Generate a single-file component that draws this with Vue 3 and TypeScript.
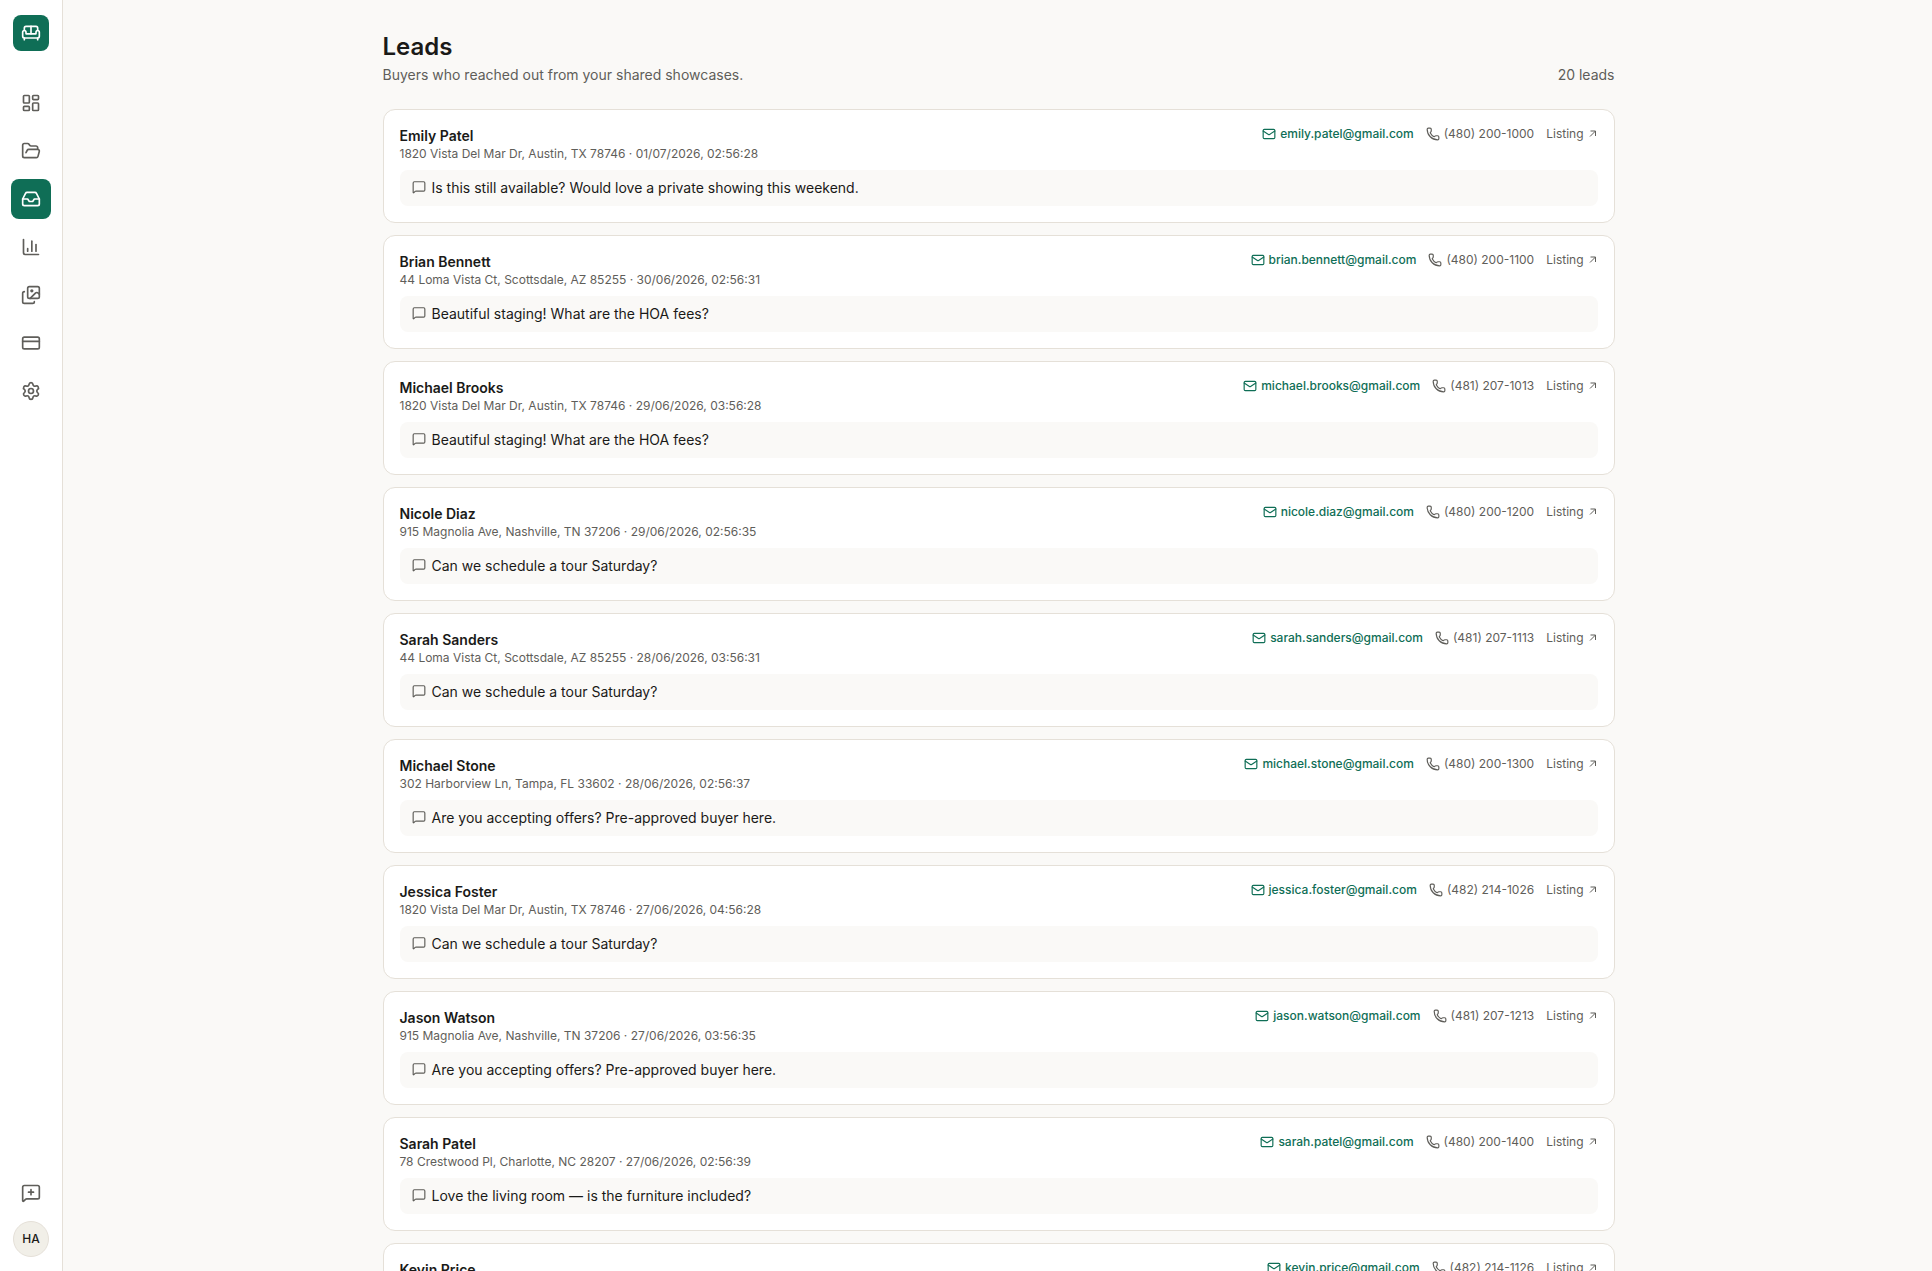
<script setup lang="ts">
interface Lead {
  name: string
  address: string
  date: string
  email: string
  phone: string
  message: string
}

interface NavItem {
  label: string
  active?: boolean
  icon: string
}

const nav: NavItem[] = [
  {
    label: 'Dashboard',
    icon: '<rect width="7" height="9" x="3" y="3" rx="1"/><rect width="7" height="5" x="14" y="3" rx="1"/><rect width="7" height="9" x="14" y="12" rx="1"/><rect width="7" height="5" x="3" y="16" rx="1"/>',
  },
  {
    label: 'Projects',
    icon: '<path d="m6 14 1.5-2.9A2 2 0 0 1 9.24 10H20a2 2 0 0 1 1.94 2.5l-1.54 6a2 2 0 0 1-1.95 1.5H4a2 2 0 0 1-2-2V5a2 2 0 0 1 2-2h3.9a2 2 0 0 1 1.69.9l.81 1.2a2 2 0 0 0 1.67.9H18a2 2 0 0 1 2 2v2"/>',
  },
  {
    label: 'Leads',
    active: true,
    icon: '<path d="M22 12h-6l-2 3h-4l-2-3H2"/><path d="M5.45 5.11 2 12v6a2 2 0 0 0 2 2h16a2 2 0 0 0 2-2v-6l-3.45-6.89A2 2 0 0 0 16.76 4H7.24a2 2 0 0 0-1.79 1.11z"/>',
  },
  {
    label: 'Analytics',
    icon: '<path d="M3 3v16a2 2 0 0 0 2 2h16"/><path d="M18 17V9"/><path d="M13 17V5"/><path d="M8 17v-3"/>',
  },
  {
    label: 'Gallery',
    icon: '<path d="m22 11-1.296-1.296a2.4 2.4 0 0 0-3.408 0L11 16"/><path d="M4 8a2 2 0 0 0-2 2v10a2 2 0 0 0 2 2h10a2 2 0 0 0 2-2"/><circle cx="13" cy="7" r="1" fill="currentColor"/><rect x="8" y="2" width="14" height="14" rx="2"/>',
  },
  {
    label: 'Billing',
    icon: '<rect width="20" height="14" x="2" y="5" rx="2"/><path d="M2 10h20"/>',
  },
  {
    label: 'Settings',
    icon: '<path d="M9.671 4.136a2.34 2.34 0 0 1 4.659 0 2.34 2.34 0 0 0 3.319 1.915 2.34 2.34 0 0 1 2.33 4.033 2.34 2.34 0 0 0 0 3.831 2.34 2.34 0 0 1-2.33 4.033 2.34 2.34 0 0 0-3.319 1.915 2.34 2.34 0 0 1-4.659 0 2.34 2.34 0 0 0-3.32-1.915 2.34 2.34 0 0 1-2.33-4.033 2.34 2.34 0 0 0 0-3.831A2.34 2.34 0 0 1 6.35 6.051a2.34 2.34 0 0 0 3.319-1.915"/><circle cx="12" cy="12" r="3"/>',
  },
]

const austin = '1820 Vista Del Mar Dr, Austin, TX 78746'
const scottsdale = '44 Loma Vista Ct, Scottsdale, AZ 85255'
const nashville = '915 Magnolia Ave, Nashville, TN 37206'

const leads: Lead[] = [
  { name: 'Emily Patel', address: austin, date: '01/07/2026, 02:56:28', email: 'emily.patel@gmail.com', phone: '(480) 200-1000', message: 'Is this still available? Would love a private showing this weekend.' },
  { name: 'Brian Bennett', address: scottsdale, date: '30/06/2026, 02:56:31', email: 'brian.bennett@gmail.com', phone: '(480) 200-1100', message: 'Beautiful staging! What are the HOA fees?' },
  { name: 'Michael Brooks', address: austin, date: '29/06/2026, 03:56:28', email: 'michael.brooks@gmail.com', phone: '(481) 207-1013', message: 'Beautiful staging! What are the HOA fees?' },
  { name: 'Nicole Diaz', address: nashville, date: '29/06/2026, 02:56:35', email: 'nicole.diaz@gmail.com', phone: '(480) 200-1200', message: 'Can we schedule a tour Saturday?' },
  { name: 'Sarah Sanders', address: scottsdale, date: '28/06/2026, 03:56:31', email: 'sarah.sanders@gmail.com', phone: '(481) 207-1113', message: 'Can we schedule a tour Saturday?' },
  { name: 'Michael Stone', address: '302 Harborview Ln, Tampa, FL 33602', date: '28/06/2026, 02:56:37', email: 'michael.stone@gmail.com', phone: '(480) 200-1300', message: 'Are you accepting offers? Pre-approved buyer here.' },
  { name: 'Jessica Foster', address: austin, date: '27/06/2026, 04:56:28', email: 'jessica.foster@gmail.com', phone: '(482) 214-1026', message: 'Can we schedule a tour Saturday?' },
  { name: 'Jason Watson', address: nashville, date: '27/06/2026, 03:56:35', email: 'jason.watson@gmail.com', phone: '(481) 207-1213', message: 'Are you accepting offers? Pre-approved buyer here.' },
  { name: 'Sarah Patel', address: '78 Crestwood Pl, Charlotte, NC 28207', date: '27/06/2026, 02:56:39', email: 'sarah.patel@gmail.com', phone: '(480) 200-1400', message: 'Love the living room — is the furniture included?' },
  { name: 'Kevin Price', address: scottsdale, date: '26/06/2026, 04:56:31', email: 'kevin.price@gmail.com', phone: '(482) 214-1126', message: 'Can we schedule a tour Saturday?' },
]

const total = 20
</script>

<template>
  <div class="shell">
    <aside class="sidebar">
      <a class="logo" href="#" aria-label="Home">
        <svg class="icon" viewBox="0 0 24 24">
          <path d="M20 9V6a2 2 0 0 0-2-2H6a2 2 0 0 0-2 2v3" />
          <path d="M2 16a2 2 0 0 0 2 2h16a2 2 0 0 0 2-2v-5a2 2 0 0 0-4 0v1.5a.5.5 0 0 1-.5.5h-11a.5.5 0 0 1-.5-.5V11a2 2 0 0 0-4 0z" />
          <path d="M4 18v2" />
          <path d="M20 18v2" />
          <path d="M12 4v9" />
        </svg>
      </a>
      <nav class="nav">
        <a
          v-for="item in nav"
          :key="item.label"
          class="nav-item"
          :class="{ active: item.active }"
          href="#"
          :aria-label="item.label"
        >
          <svg class="icon" viewBox="0 0 24 24" v-html="item.icon" />
        </a>
      </nav>
      <div class="foot">
        <button class="nav-item" type="button" aria-label="Send feedback">
          <svg class="icon" viewBox="0 0 24 24">
            <path d="M22 17a2 2 0 0 1-2 2H6.828a2 2 0 0 0-1.414.586l-2.202 2.202A.71.71 0 0 1 2 21.286V5a2 2 0 0 1 2-2h16a2 2 0 0 1 2 2z" />
            <path d="M12 8v6" />
            <path d="M9 11h6" />
          </svg>
        </button>
        <button class="avatar" type="button">HA</button>
      </div>
    </aside>

    <main class="main">
      <div class="page">
        <header class="head">
          <div>
            <h1>Leads</h1>
            <p>Buyers who reached out from your shared showcases.</p>
          </div>
          <span>{{ total }} leads</span>
        </header>

        <ul class="list">
          <li v-for="lead in leads" :key="lead.email" class="card">
            <div class="card-top">
              <div>
                <h2>{{ lead.name }}</h2>
                <p class="meta">{{ lead.address }} · {{ lead.date }}</p>
              </div>
              <div class="contacts">
                <a class="email" :href="`mailto:${lead.email}`">
                  <svg class="icon small" viewBox="0 0 24 24">
                    <path d="m22 7-8.991 5.727a2 2 0 0 1-2.009 0L2 7" />
                    <rect x="2" y="4" width="20" height="16" rx="2" />
                  </svg>
                  {{ lead.email }}
                </a>
                <a :href="`tel:${lead.phone}`">
                  <svg class="icon small" viewBox="0 0 24 24">
                    <path d="M13.832 16.568a1 1 0 0 0 1.213-.303l.355-.465A2 2 0 0 1 17 15h3a2 2 0 0 1 2 2v3a2 2 0 0 1-2 2A18 18 0 0 1 2 4a2 2 0 0 1 2-2h3a2 2 0 0 1 2 2v3a2 2 0 0 1-.8 1.6l-.468.351a1 1 0 0 0-.292 1.233 14 14 0 0 0 6.392 6.384" />
                  </svg>
                  {{ lead.phone }}
                </a>
                <a class="listing" href="#">
                  Listing
                  <svg class="icon arrow" viewBox="0 0 24 24">
                    <path d="M9 6h10v10" />
                    <path d="M8 17 19 6" />
                  </svg>
                </a>
              </div>
            </div>
            <div class="message">
              <svg class="icon small" viewBox="0 0 24 24">
                <path d="M22 17a2 2 0 0 1-2 2H6.828a2 2 0 0 0-1.414.586l-2.202 2.202A.71.71 0 0 1 2 21.286V5a2 2 0 0 1 2-2h16a2 2 0 0 1 2 2z" />
              </svg>
              <p>{{ lead.message }}</p>
            </div>
          </li>
        </ul>
      </div>
    </main>
  </div>
</template>

<style>
body {
  margin: 0;
  background: #faf9f7;
}
</style>

<style scoped>
* {
  box-sizing: border-box;
}

.shell {
  display: flex;
  height: 100vh;
  background: #faf9f7;
  color: #1a1a18;
  font-family: Inter, "Liberation Sans", sans-serif;
  font-size: 14px;
  line-height: 20px;
}

h1,
h2,
p,
ul {
  margin: 0;
  padding: 0;
}

a {
  color: inherit;
  text-decoration: none;
}

button {
  padding: 0;
  border: 0;
  background: none;
  font: inherit;
  color: inherit;
}

.icon {
  display: block;
  flex: none;
  width: 20px;
  height: 20px;
  fill: none;
  stroke: currentColor;
  stroke-width: 2;
  stroke-linecap: round;
  stroke-linejoin: round;
}

.icon.small {
  width: 14px;
  height: 14px;
}

.icon.arrow {
  width: 12px;
  height: 12px;
  stroke-linecap: butt;
  stroke-linejoin: miter;
}

.sidebar {
  display: flex;
  flex: none;
  flex-direction: column;
  align-items: center;
  width: 63px;
  padding: 15px 0 14px;
  border-right: 1px solid #e5e0d8;
  background: #fff;
}

.logo {
  display: grid;
  place-items: center;
  width: 36px;
  height: 36px;
  border-radius: 8px;
  background: #0f6e56;
  color: #fff;
}

.nav {
  display: flex;
  flex-direction: column;
  gap: 8px;
  margin-top: 32px;
}

.nav-item {
  display: grid;
  place-items: center;
  width: 40px;
  height: 40px;
  border-radius: 8px;
  color: #5f5e5a;
}

.nav-item.active {
  background: #0f6e56;
  color: #fff;
}

.foot {
  display: flex;
  flex-direction: column;
  align-items: center;
  gap: 8px;
  margin-top: auto;
}

.avatar {
  width: 36px;
  height: 36px;
  border: 1px solid #e5e0d8;
  border-radius: 50%;
  background: #f1efe8;
  color: #1a1a18;
  font-size: 12px;
  font-weight: 500;
  line-height: 16px;
}

.main {
  flex: 1;
  min-width: 0;
  padding-left: 2px;
  overflow-y: auto;
  scrollbar-width: none;
}

.page {
  max-width: 1280px;
  margin: 0 auto;
  padding: 31px 24px 32px;
}

.head {
  display: flex;
  align-items: flex-end;
  justify-content: space-between;
  margin-bottom: 24px;
  color: #5f5e5a;
}

h1 {
  margin-bottom: 2px;
  color: #1a1a18;
  font-size: 24px;
  font-weight: 600;
  line-height: 32px;
}

.list {
  display: flex;
  flex-direction: column;
  gap: 12px;
  list-style: none;
}

.card {
  padding: 16px;
  border: 1px solid #e5e0d8;
  border-radius: 12px;
  background: #fff;
}

.card-top {
  display: flex;
  align-items: flex-start;
  justify-content: space-between;
  gap: 12px;
}

h2 {
  font-size: 14px;
  font-weight: 600;
  line-height: 20px;
}

.meta,
.contacts {
  color: #5f5e5a;
  font-size: 12px;
  line-height: 16px;
}

.contacts {
  display: flex;
  gap: 12px;
}

.contacts a {
  display: flex;
  align-items: center;
  gap: 4px;
}

.contacts .listing {
  gap: 2px;
}

.contacts .email {
  color: #0f6e56;
  font-weight: 500;
}

.message {
  display: flex;
  gap: 6px;
  margin-top: 8px;
  padding: 8px 12px;
  border-radius: 8px;
  background: #faf9f7;
}

.message .icon {
  margin-top: 2px;
  color: #5f5e5a;
}
</style>
